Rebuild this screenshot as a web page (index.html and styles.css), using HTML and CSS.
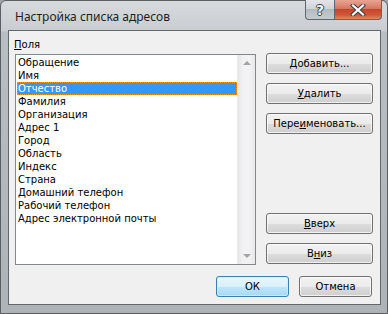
FILE: index.html
```html
<!DOCTYPE html>
<html lang="ru">
<head>
	<meta charset="utf-8" />
	<title>Настройка списка адресов</title>
	<link rel="stylesheet" href="styles.css">
</head>
<body>
    <div class="window">
        <div class="titlebar">
            <span class="title">Настройка списка адресов</span>
            <div class="caption">
                <span class="cap-btn help">?</span>
                <span class="cap-btn close">
                    <svg width="16" height="12" viewBox="0 0 16 12">
                        <path d="M3 1.5 L13 10.5 M13 1.5 L3 10.5" stroke="#3a3f48" stroke-width="4.2" stroke-linecap="square"/>
                        <path d="M3 1.5 L13 10.5 M13 1.5 L3 10.5" stroke="#ffffff" stroke-width="2.2" stroke-linecap="square"/>
                    </svg>
                </span>
            </div>
        </div>

        <div class="client">
            <div class="label"><u>П</u>оля</div>

            <div class="main">
                <div class="listbox">
                    <ul class="items">
                        <li>Обращение</li>
                        <li>Имя</li>
                        <li class="selected">Отчество</li>
                        <li>Фамилия</li>
                        <li>Организация</li>
                        <li>Адрес 1</li>
                        <li>Город</li>
                        <li>Область</li>
                        <li>Индекс</li>
                        <li>Страна</li>
                        <li>Домашний телефон</li>
                        <li>Рабочий телефон</li>
                        <li>Адрес электронной почты</li>
                    </ul>
                    <div class="scrollbar">
                        <span class="arrow up"></span>
                        <span class="arrow down"></span>
                    </div>
                </div>

                <div class="side">
                    <button class="btn"><u>Д</u>обавить...</button>
                    <button class="btn"><u>У</u>далить</button>
                    <button class="btn">Пере<u>и</u>меновать...</button>
                    <div class="spacer"></div>
                    <button class="btn"><u>В</u>верх</button>
                    <button class="btn">В<u>н</u>из</button>
                </div>
            </div>

            <div class="footer">
                <button class="btn default">ОК</button>
                <button class="btn">Отмена</button>
            </div>
        </div>
    </div>
</body>
</html>
```

FILE: styles.css
```css
html, body {
    margin: 0;
    padding: 0;
}
body {
    width: 388px;
    height: 314px;
    overflow: hidden;
    background: #9fa4a9;
}

/* window frame */
.window {
    box-sizing: border-box;
    width: 388px;
    height: 314px;
    padding: 0 6px 8px 7px;
    border: 1px solid #5b5f64;
    border-radius: 6px 6px 0 0;
    background:
        linear-gradient(180deg, #d7dadd 0, #c9cdd1 30px, #b9bec2 31px, #aeb3b7 100%);
    display: flex;
    flex-direction: column;
}

.titlebar {
    height: 29px;
    display: flex;
    justify-content: space-between;
    align-items: flex-start;
}
.title {
    margin: 9px 0 0 7px;
    font: 12px/14px "Noto Sans", "Open Sans", sans-serif;
    color: #1e1e1e;
}
.caption {
    display: flex;
    margin-top: -1px;
    margin-right: -1px;
}
.cap-btn {
    box-sizing: border-box;
    height: 20px;
    display: flex;
    align-items: center;
    justify-content: center;
    border: 1px solid #5e6670;
    border-top: 0;
}
.help {
    width: 29px;
    border-right: 0;
    border-radius: 0 0 0 4px;
    background: linear-gradient(180deg, #e3e6e9 0, #d0d4d8 45%, #b4babf 50%, #c6cbd0 100%);
    font: bold 14px/1 "DejaVu Sans", sans-serif;
    color: #f4f5f6;
    text-shadow: 1px 0 #3c424a, -1px 0 #3c424a, 0 1px #3c424a, 0 -1px #3c424a;
}
.close {
    width: 48px;
    border-radius: 0 0 4px 0;
    background: linear-gradient(180deg, #e8a493 0, #d77660 45%, #c7452a 50%, #d1583a 80%, #e08a64 100%);
}

/* client area */
.client {
    flex: 1;
    border: 1px solid #62676c;
    background: #f0f0f0;
    padding: 7px 7px 7px 5px;
    font: 10px/13px "DejaVu Sans", sans-serif;
    color: #000;
}
.label {
    margin-left: 0;
    height: 13px;
    margin-bottom: 3px;
}
.main {
    display: flex;
    align-items: flex-start;
}

.listbox {
    box-sizing: border-box;
    width: 242px;
    height: 211px;
    margin-left: 1px;
    border: 1px solid #828790;
    background: #fff;
    display: flex;
}
.items {
    flex: 1;
    list-style: none;
    margin: 0;
    padding: 1px 0 0 1px;
}
.items li {
    height: 13px;
    padding-left: 1px;
    white-space: nowrap;
}
.items .selected {
    box-sizing: border-box;
    background: #3399ff;
    color: #fff;
    outline: 1px dotted #ff9a1f;
    outline-offset: -1px;
}
.scrollbar {
    width: 17px;
    position: relative;
    background: linear-gradient(90deg, #e6e6e6, #f2f2f2 30%, #f2f2f2 70%, #e8e8e8);
    border-left: 1px solid #ececec;
}
.arrow {
    position: absolute;
    left: 5px;
    width: 0;
    height: 0;
    border-left: 4px solid transparent;
    border-right: 4px solid transparent;
}
.arrow.up {
    top: 6px;
    border-bottom: 4px solid #a3a3a3;
}
.arrow.down {
    bottom: 6px;
    border-top: 4px solid #a3a3a3;
}

.side {
    width: 107px;
    height: 211px;
    margin: -1px 0 0 10px;
    display: flex;
    flex-direction: column;
    gap: 9px;
}
.spacer {
    flex: 1;
}

.btn {
    box-sizing: border-box;
    height: 21px;
    padding: 0;
    border: 1px solid #707070;
    border-radius: 3px;
    background: linear-gradient(180deg, #f2f2f2 0, #ebebeb 50%, #dddddd 51%, #cfcfcf 100%);
    box-shadow: inset 0 0 0 1px rgba(255, 255, 255, 0.7);
    font: 10px/13px "DejaVu Sans", sans-serif;
    color: #000;
    text-align: center;
}
.side .btn {
    width: 107px;
}

.footer {
    display: flex;
    justify-content: flex-end;
    gap: 10px;
    margin-top: 11px;
    padding-right: 1px;
}
.footer .btn {
    width: 73px;
}
.btn.default {
    border-color: #3c7fb1;
    background: linear-gradient(180deg, #eaf6fd 0, #d9f0fc 50%, #bee6fd 51%, #a7d9f5 100%);
    box-shadow: inset 0 0 0 1px rgba(200, 240, 255, 0.8);
}
```
